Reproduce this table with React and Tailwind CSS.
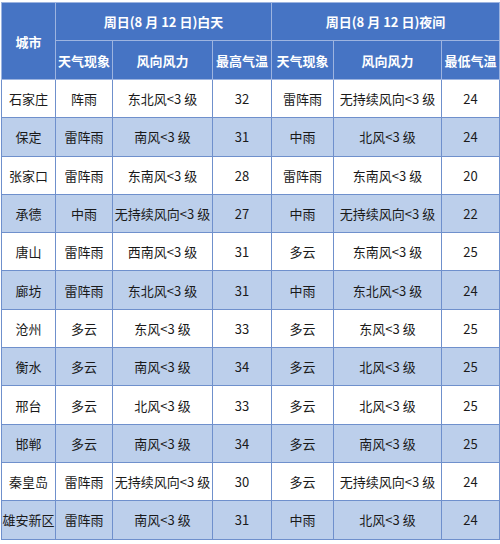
const rows = [
  ['石家庄', '阵雨', '东北风<3 级', '32', '雷阵雨', '无持续风向<3 级', '24'],
  ['保定', '雷阵雨', '南风<3 级', '31', '中雨', '北风<3 级', '24'],
  ['张家口', '雷阵雨', '东南风<3 级', '28', '雷阵雨', '东南风<3 级', '20'],
  ['承德', '中雨', '无持续风向<3 级', '27', '中雨', '无持续风向<3 级', '22'],
  ['唐山', '雷阵雨', '西南风<3 级', '31', '多云', '东南风<3 级', '25'],
  ['廊坊', '雷阵雨', '东北风<3 级', '31', '中雨', '东北风<3 级', '24'],
  ['沧州', '多云', '东风<3 级', '33', '多云', '东风<3 级', '25'],
  ['衡水', '多云', '南风<3 级', '34', '多云', '北风<3 级', '25'],
  ['邢台', '多云', '北风<3 级', '33', '多云', '北风<3 级', '25'],
  ['邯郸', '多云', '南风<3 级', '34', '多云', '南风<3 级', '25'],
  ['秦皇岛', '雷阵雨', '无持续风向<3 级', '30', '多云', '无持续风向<3 级', '24'],
  ['雄安新区', '雷阵雨', '南风<3 级', '31', '中雨', '北风<3 级', '24'],
];

export default function App() {
  const th = 'border border-[#9db4e0] bg-[#4674c4] text-white font-bold text-center p-0';
  return (
    <div className="w-[500px] h-[544px] bg-white pt-[2px] pl-[1px]" style={{ fontFamily: '"Noto Sans CJK SC", "Noto Sans", sans-serif' }}>
      <table className="table-fixed border-collapse w-[498px] text-[13px] leading-none border border-[#6f90cc]">
        <colgroup>
          <col className="w-[54px]" />
          <col className="w-[57px]" />
          <col className="w-[100px]" />
          <col className="w-[59px]" />
          <col className="w-[62px]" />
          <col className="w-[108px]" />
          <col className="w-[58px]" />
        </colgroup>
        <thead>
          <tr className="h-[38px]">
            <th rowSpan={2} className={th}>城市</th>
            <th colSpan={3} className={th}>周日(8 月 12 日)白天</th>
            <th colSpan={3} className={th}>周日(8 月 12 日)夜间</th>
          </tr>
          <tr className="h-[39px]">
            <th className={th}>天气现象</th>
            <th className={th}>风向风力</th>
            <th className={th}>最高气温</th>
            <th className={th}>天气现象</th>
            <th className={th}>风向风力</th>
            <th className={th}>最低气温</th>
          </tr>
        </thead>
        <tbody>
          {rows.map((r, i) => (
            <tr key={i} className={`h-[38.3px] ${i % 2 === 1 ? 'bg-[#bccfeb]' : 'bg-white'}`}>
              {r.map((c, j) => (
                <td key={j} className="border border-[#6f90cc] text-center text-[#1a1a1a] p-0 whitespace-nowrap">{c}</td>
              ))}
            </tr>
          ))}
        </tbody>
      </table>
    </div>
  );
}
